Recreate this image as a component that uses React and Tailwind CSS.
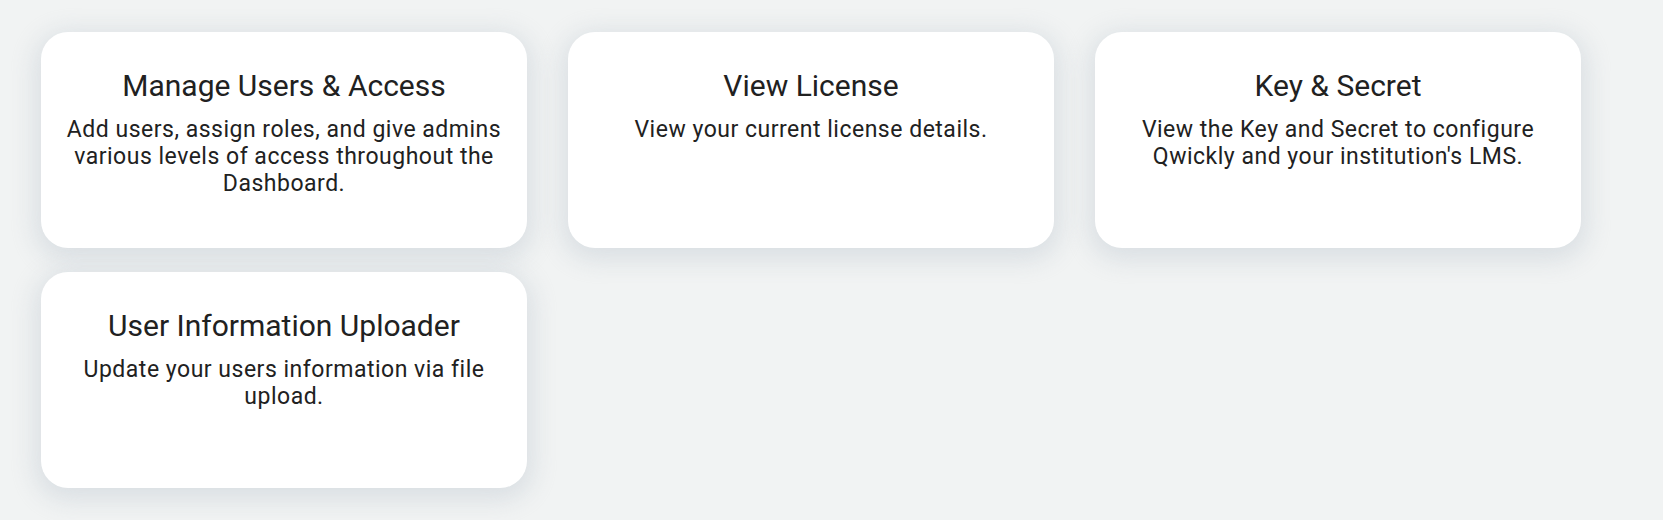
const cards = [
	{
		title: 'Manage Users & Access',
		description: 'Add users, assign roles, and give admins various levels of access throughout the Dashboard.',
	},
	{
		title: 'View License',
		description: 'View your current license details.',
	},
	{
		title: 'Key & Secret',
		description: "View the Key and Secret to configure Qwickly and your institution's LMS.",
	},
	{
		title: 'User Information Uploader',
		description: 'Update your users information via file upload.',
	},
];

export default function App() {
	return (
		<div className="min-h-[520px] w-full bg-[#f1f3f3] font-['Roboto',sans-serif]">
			<div className="grid grid-cols-[486px_486px_486px] gap-x-[41px] gap-y-[24px] pl-[41px] pt-[32px]">
				{cards.map((card) => (
					<div
						key={card.title}
						className="h-[216px] rounded-[27px] bg-white px-[24px] pt-[34px] text-center text-[#212121] shadow-[0_6px_24px_6px_rgba(190,200,208,0.45)]"
					>
						<h2 className="text-[30px] leading-[40px] font-normal">{card.title}</h2>
						<p className="mt-[10px] text-[23px] leading-[27px] font-normal tracking-[0.022em]">{card.description}</p>
					</div>
				))}
			</div>
		</div>
	);
}
